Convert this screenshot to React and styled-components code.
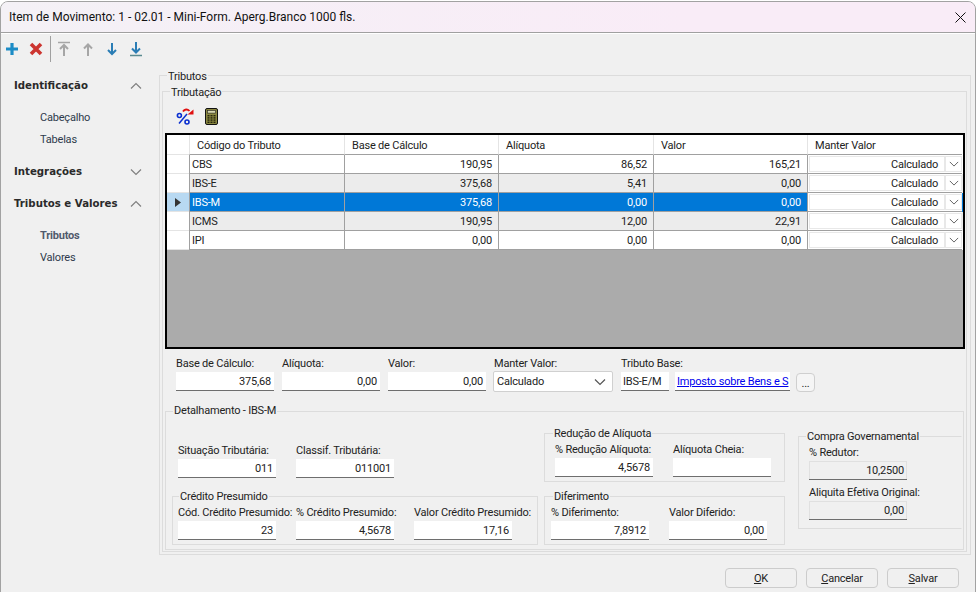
import React from "react";
import styled, { createGlobalStyle } from "styled-components";

const GlobalStyle = createGlobalStyle`
  html, body {
    margin: 0;
    padding: 0;
    background: #fff;
  }
  * {
    box-sizing: border-box;
  }
`;

const uiFont = `Roboto, "Liberation Sans", sans-serif`;

const Page = styled.div`
  width: 976px;
  height: 592px;
  padding-top: 1px;
  overflow: hidden;
  font-family: ${uiFont};
  font-size: 11px;
  letter-spacing: -0.2px;
  color: #222;
`;

const Window = styled.div`
  width: 976px;
  height: 600px;
  display: flex;
  flex-direction: column;
  background: #f0f0f0;
  border: 1px solid #a2a2a2;
  border-radius: 8px;
  overflow: hidden;
`;

const TitleBar = styled.div`
  height: 31px;
  flex: none;
  display: flex;
  align-items: center;
  justify-content: space-between;
  padding: 0 9px 0 8px;
  font-size: 12px;
  letter-spacing: 0;
  color: #111;
  background: linear-gradient(90deg, #f4f1f6, #f9ecf7 70%);
  border-bottom: 1px solid #a0a0a0;
`;

const ToolBar = styled.div`
  height: 31px;
  flex: none;
  display: flex;
  align-items: center;
  gap: 2px;
  border-top: 1px solid #fff;
`;

const ToolButton = styled.div`
  width: 22px;
  height: 16px;
  display: flex;
  align-items: center;
  justify-content: center;
`;

const ToolSeparator = styled.div`
  width: 1px;
  height: 26px;
  margin-left: 1px;
  background: #a0a0a0;
`;

const Body = styled.div`
  flex: 1;
  display: flex;
`;

const Sidebar = styled.nav`
  width: 158px;
  flex: none;
  padding-top: 11px;
  display: flex;
  flex-direction: column;
  gap: 11px;
`;

const SectionHead = styled.div`
  height: 21px;
  padding: 0 17px 0 13px;
  display: flex;
  align-items: center;
  justify-content: space-between;
  font-family: "DejaVu Sans", sans-serif;
  font-size: 10.2px;
  font-weight: 700;
  letter-spacing: 0;
  color: #2a2a2a;
`;

const SectionItems = styled.div`
  margin-top: 10px;
`;

const SectionItem = styled.div`
  height: 22px;
  padding: 1px 0 0 39px;
  line-height: 22px;
  color: ${({ $active }) => ($active ? "#505a6c" : "#2e3a4c")};
  font-weight: ${({ $active }) => ($active ? 700 : 400)};
`;

const Content = styled.main`
  width: 812px;
  flex: none;
  padding-top: 11px;
`;

const Group = styled.div`
  position: relative;
  border: 1px solid #dcdcdc;
  border-right-color: ${({ $openRight }) => ($openRight ? "transparent" : "#dcdcdc")};
`;

const Legend = styled.span`
  position: absolute;
  top: ${({ $top }) => $top || -7}px;
  left: ${({ $left }) => $left || 7}px;
  padding: 0 1px;
  line-height: 14px;
  background: #f0f0f0;
  color: #222;
`;

const OuterGroup = styled(Group)`
  height: 480px;
  padding: 15px 3px 2px 2px;
`;

const TaxGroup = styled(Group)`
  height: 461px;
  display: flex;
  flex-direction: column;
`;

const GridTools = styled.div`
  height: 41px;
  flex: none;
  padding: 16px 0 0 13px;
  display: flex;
  align-items: flex-start;
  gap: 11px;
`;

const Grid = styled.div`
  height: 216px;
  flex: none;
  margin: 0 1px 0 2px;
  border: 2px solid #000;
  background: #ababab;
`;

const GridRow = styled.div`
  height: 19px;
  display: grid;
  grid-template-columns: 22px 155px 154px 155px 154px 155px;
  grid-template-rows: 100%;
  background: ${({ $selected, $shaded }) =>
    $selected ? "#0078d7" : $shaded ? "#ececec" : "#fff"};
  color: ${({ $selected }) => ($selected ? "#fff" : "#222")};
`;

const HeaderRow = styled(GridRow)`
  height: 20px;
  background: #fff;
`;

const HeaderCell = styled.div`
  padding: 1px 0 0 7px;
  line-height: 19px;
  border-left: 1px solid #e4e4e4;
  border-bottom: 1px solid #a0a0a0;
`;

const Indicator = styled.div`
  display: flex;
  align-items: center;
  justify-content: center;
  background: ${({ $selected }) => ($selected ? "#b8d9f2" : "#fff")};
  border-bottom: 1px solid #e4e4e4;
`;

const Cell = styled.div`
  padding: 1px 6px 0 2px;
  line-height: 18px;
  text-align: ${({ $right }) => ($right ? "right" : "left")};
  border-left: 1px solid #a0a0a0;
  border-bottom: 1px solid #a0a0a0;
`;

const ComboCell = styled.div`
  display: flex;
  background: #fff;
  color: #222;
  border-left: 1px solid #a0a0a0;
  border-bottom: 1px solid #a0a0a0;
  padding: 1px 0 1px 1px;
`;

const ComboText = styled.div`
  flex: 1;
  padding: 1px 7px 0 0;
  text-align: right;
  line-height: 16px;
  background: #fff;
  box-shadow: inset 0 0 0 1px #e8e8e8;
`;

const ComboArrow = styled.div`
  width: 17px;
  display: flex;
  align-items: center;
  justify-content: center;
  background: #fff;
  box-shadow: inset 0 0 0 1px #e8e8e8;
`;

const FieldsRow = styled.div`
  flex: none;
  margin-top: 8px;
  padding-left: 13px;
  display: flex;
  gap: 8px;
`;

const Field = styled.div`
  display: flex;
  flex-direction: column;
  gap: 1px;
`;

const InputField = styled(Field)`
  width: 98px;
  flex: none;
`;

const FieldLabel = styled.div`
  height: 14px;
  line-height: 14px;
  white-space: nowrap;
`;

const Input = styled.div`
  width: ${({ $width }) => $width || 98}px;
  height: 19px;
  padding: 0 3px;
  line-height: 20px;
  text-align: right;
  white-space: nowrap;
  overflow: hidden;
  background: ${({ $readOnly }) => ($readOnly ? "#f0f0f0" : "#fff")};
  border-bottom: 1px solid #6e6e6e;
  box-shadow: ${({ $readOnly }) =>
    $readOnly ? "inset 1px 1px 0 #e0e0e0, inset -1px 0 0 #e0e0e0" : "none"};
`;

const CodeInput = styled(Input)`
  padding-left: 2px;
  text-align: left;
`;

const LinkInput = styled(Input)`
  padding-left: 2px;
  text-align: left;
  color: #0000ee;
  text-decoration: underline;
`;

const Select = styled.div`
  width: 120px;
  height: 21px;
  margin: -1px 0 0 -1px;
  padding: 0 6px 0 3px;
  display: flex;
  align-items: center;
  justify-content: space-between;
  background: #fff;
  border: 1px solid #d0d0d0;
  border-radius: 2px;
`;

const BaseFields = styled.div`
  display: flex;
  gap: 6px;
`;

const DotsButton = styled.div`
  width: 19px;
  height: 19px;
  margin-top: 1px;
  text-align: center;
  line-height: 19px;
  background: #f5f5f5;
  border: 1px solid #cfcfcf;
  border-radius: 4px;
`;

const DetailGroup = styled(Group)`
  height: 139px;
  flex: none;
  margin: 19px 2px 0 2px;
  padding: 21px 0 0 6px;
  display: grid;
  grid-template-columns: 366px 241px 164px;
  grid-template-rows: 49px 49px;
  column-gap: 6px;
  row-gap: 14px;
`;

const PlainFields = styled.div`
  padding: 0 0 4px 6px;
  display: flex;
  align-items: flex-end;
  gap: 20px;
`;

const BoxFields = styled(Group)`
  padding: 0 0 4px ${({ $inset }) => $inset}px;
  display: flex;
  align-items: flex-end;
  gap: 20px;
`;

const GovGroup = styled(Group)`
  grid-column: 3;
  grid-row: 1 / span 2;
  width: 164px;
  height: 93px;
  margin: 3px 0 0 7px;
  padding: 9px 0 0 10px;
  display: flex;
  flex-direction: column;
  gap: 6px;
`;

const Footer = styled.footer`
  height: 37px;
  padding: 13px 12px 0 0;
  display: flex;
  justify-content: flex-end;
  gap: 9px;
`;

const FooterButton = styled.button`
  width: 72px;
  height: 20px;
  padding: 0;
  font: inherit;
  letter-spacing: inherit;
  color: #222;
  background: #f0f0f0;
  border: 1px solid #cccccc;
  border-radius: 4px;
  u {
    text-decoration: underline;
  }
`;

const Chevron = ({ up, size = 12, color = "#808080" }) => (
  <svg width={size} height={size} viewBox="0 0 12 12">
    <path
      d={up ? "M1 8.5 6 3.5l5 5" : "M1 3.5l5 5 5-5"}
      fill="none"
      stroke={color}
      strokeWidth="1.2"
    />
  </svg>
);

const CloseIcon = () => (
  <svg width="11" height="11" viewBox="0 0 11 11">
    <path d="M.5.5l10 10M10.5.5l-10 10" stroke="#111" strokeWidth="1" />
  </svg>
);

const PlusIcon = () => (
  <svg width="14" height="14" viewBox="0 0 14 14">
    <path d="M7 1v12M1 7h12" stroke="#1c8cc6" strokeWidth="3.2" />
  </svg>
);

const CrossIcon = () => (
  <svg width="14" height="14" viewBox="0 0 14 14">
    <path d="M2 2l10 10M12 2 2 12" stroke="#cc3530" strokeWidth="3.6" />
  </svg>
);

const ArrowIcon = ({ down, bar, color, barColor }) => (
  <svg width="16" height="16" viewBox="0 0 16 16">
    {bar && (
      <path
        d={down ? "M2 14.5h12" : "M2 1.5h12"}
        stroke={barColor || color}
        strokeWidth="1.6"
      />
    )}
    <path
      d={
        down
          ? `M8 ${bar ? 1 : 2}v${bar ? 10 : 11}M4 ${bar ? 7.5 : 9}l4 4 4-4`
          : `M8 15V${bar ? 5 : 4}M4 ${bar ? 8 : 7.5}l4-4 4 4`
      }
      fill="none"
      stroke={color}
      strokeWidth="2"
    />
  </svg>
);

const PercentIcon = () => (
  <svg width="18" height="17" viewBox="0 0 18 17">
    <path d="M3 15.5 11 6" stroke="#0a2fd0" strokeWidth="1.5" />
    <circle cx="3.4" cy="7.5" r="2" fill="none" stroke="#0a2fd0" strokeWidth="1.6" />
    <circle cx="11" cy="14" r="2" fill="none" stroke="#0a2fd0" strokeWidth="1.6" />
    <path d="M7 3.5C8.5 1 11.5 .8 13.5 3" fill="none" stroke="#e01010" strokeWidth="1.8" />
    <path d="M17.5 1.5v5h-6z" fill="#e01010" />
  </svg>
);

const CalcIcon = () => (
  <svg width="13" height="17" viewBox="0 0 13 17">
    <rect x=".5" y=".5" width="12" height="16" rx="1.5" fill="#8a8740" stroke="#111" />
    <rect x="2.5" y="2.5" width="8" height="2.6" fill="#d8d8b0" stroke="#222" strokeWidth=".6" />
    {[7, 9.2, 11.4, 13.6].map((y) =>
      [2.5, 5.5, 8.5].map((x) => (
        <rect key={`${x}-${y}`} x={x} y={y} width="2" height="1.4" fill="#26260e" />
      ))
    )}
  </svg>
);

const RowPointer = () => (
  <svg width="6" height="9" viewBox="0 0 6 9">
    <path d="M0 0l6 4.5L0 9z" fill="#333" />
  </svg>
);

const rows = [
  { code: "CBS", base: "190,95", rate: "86,52", value: "165,21" },
  { code: "IBS-E", base: "375,68", rate: "5,41", value: "0,00", shaded: true },
  { code: "IBS-M", base: "375,68", rate: "0,00", value: "0,00", selected: true },
  { code: "ICMS", base: "190,95", rate: "12,00", value: "22,91", shaded: true },
  { code: "IPI", base: "0,00", rate: "0,00", value: "0,00" },
];

const columns = ["Código do Tributo", "Base de Cálculo", "Alíquota", "Valor", "Manter Valor"];

const LabeledInput = ({ label, value, readOnly }) => (
  <InputField>
    <FieldLabel>{label}</FieldLabel>
    <Input $readOnly={readOnly}>{value}</Input>
  </InputField>
);

const Section = ({ title, open, items = [] }) => (
  <div>
    <SectionHead>
      {title}
      <Chevron up={open} />
    </SectionHead>
    {open && (
      <SectionItems>
        {items.map((item) => (
          <SectionItem key={item.label} $active={item.active}>
            {item.label}
          </SectionItem>
        ))}
      </SectionItems>
    )}
  </div>
);

const App = () => {
  return (
    <Page>
      <GlobalStyle />
      <Window>
        <TitleBar>
          Item de Movimento: 1 - 02.01 - Mini-Form. Aperg.Branco 1000 fls.
          <CloseIcon />
        </TitleBar>
        <ToolBar>
          <ToolButton><PlusIcon /></ToolButton>
          <ToolButton><CrossIcon /></ToolButton>
          <ToolSeparator />
          <ToolButton><ArrowIcon bar color="#a6a6a6" /></ToolButton>
          <ToolButton><ArrowIcon color="#a6a6a6" /></ToolButton>
          <ToolButton><ArrowIcon down color="#2a7db5" /></ToolButton>
          <ToolButton><ArrowIcon down bar color="#2a7db5" barColor="#5a8a90" /></ToolButton>
        </ToolBar>
        <Body>
          <Sidebar>
            <Section
              title="Identificação"
              open
              items={[{ label: "Cabeçalho" }, { label: "Tabelas" }]}
            />
            <Section title="Integrações" />
            <Section
              title="Tributos e Valores"
              open
              items={[{ label: "Tributos", active: true }, { label: "Valores" }]}
            />
          </Sidebar>
          <Content>
            <OuterGroup>
              <Legend $top={-6}>Tributos</Legend>
              <TaxGroup>
                <Legend $top={-6}>Tributação</Legend>
                <GridTools>
                  <PercentIcon />
                  <CalcIcon />
                </GridTools>
                <Grid>
                  <HeaderRow>
                    <Indicator />
                    {columns.map((column) => (
                      <HeaderCell key={column}>{column}</HeaderCell>
                    ))}
                  </HeaderRow>
                  {rows.map((row) => (
                    <GridRow key={row.code} $selected={row.selected} $shaded={row.shaded}>
                      <Indicator $selected={row.selected}>
                        {row.selected && <RowPointer />}
                      </Indicator>
                      <Cell>{row.code}</Cell>
                      <Cell $right>{row.base}</Cell>
                      <Cell $right>{row.rate}</Cell>
                      <Cell $right>{row.value}</Cell>
                      <ComboCell>
                        <ComboText>Calculado</ComboText>
                        <ComboArrow>
                          <Chevron size={10} color="#666" />
                        </ComboArrow>
                      </ComboCell>
                    </GridRow>
                  ))}
                </Grid>
                <FieldsRow>
                  <LabeledInput label="Base de Cálculo:" value="375,68" />
                  <LabeledInput label="Alíquota:" value="0,00" />
                  <LabeledInput label="Valor:" value="0,00" />
                  <Field>
                    <FieldLabel>Manter Valor:</FieldLabel>
                    <Select>
                      Calculado
                      <Chevron color="#555" />
                    </Select>
                  </Field>
                  <Field>
                    <FieldLabel>Tributo Base:</FieldLabel>
                    <BaseFields>
                      <CodeInput $width={48}>IBS-E/M</CodeInput>
                      <LinkInput $width={115}>Imposto sobre Bens e S</LinkInput>
                      <DotsButton>...</DotsButton>
                    </BaseFields>
                  </Field>
                </FieldsRow>
                <DetailGroup>
                  <Legend $top={-8}>Detalhamento - IBS-M</Legend>
                  <PlainFields>
                    <LabeledInput label="Situação Tributária:" value="011" />
                    <LabeledInput label="Classif. Tributária:" value="011001" />
                  </PlainFields>
                  <BoxFields $inset={10}>
                    <Legend $left={8}>Redução de Alíquota</Legend>
                    <LabeledInput label="% Redução Alíquota:" value="4,5678" />
                    <LabeledInput label="Alíquota Cheia:" value="" />
                  </BoxFields>
                  <GovGroup $openRight>
                    <Legend>Compra Governamental</Legend>
                    <LabeledInput label="% Redutor:" value="10,2500" readOnly />
                    <LabeledInput label="Aliquita Efetiva Original:" value="0,00" readOnly />
                  </GovGroup>
                  <BoxFields $inset={5}>
                    <Legend $left={6}>Crédito Presumido</Legend>
                    <LabeledInput label="Cód. Crédito Presumido:" value="23" />
                    <LabeledInput label="% Crédito Presumido:" value="4,5678" />
                    <LabeledInput label="Valor Crédito Presumido:" value="17,16" />
                  </BoxFields>
                  <BoxFields $inset={6}>
                    <Legend $left={8}>Diferimento</Legend>
                    <LabeledInput label="% Diferimento:" value="7,8912" />
                    <LabeledInput label="Valor Diferido:" value="0,00" />
                  </BoxFields>
                </DetailGroup>
              </TaxGroup>
            </OuterGroup>
            <Footer>
              <FooterButton><u>O</u>K</FooterButton>
              <FooterButton><u>C</u>ancelar</FooterButton>
              <FooterButton><u>S</u>alvar</FooterButton>
            </Footer>
          </Content>
        </Body>
      </Window>
    </Page>
  );
};

export default App;
